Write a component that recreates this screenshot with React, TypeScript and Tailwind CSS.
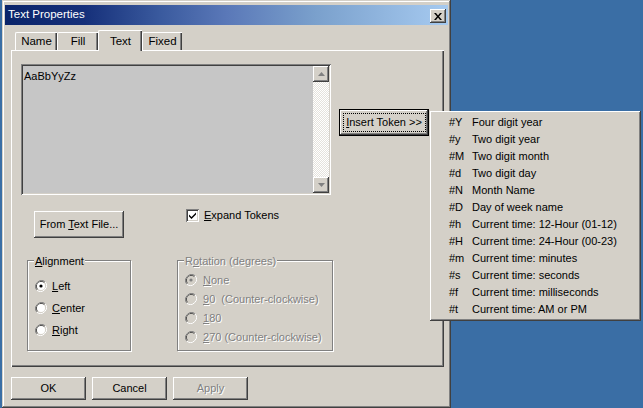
import React from 'react'

const raised =
  'bg-[#d4d0c8] shadow-[inset_-1px_-1px_0_#404040,inset_1px_1px_0_#ffffff,inset_-2px_-2px_0_#808080,inset_2px_2px_0_#d4d0c8]'
const disabledText = 'text-[#808080] [text-shadow:1px_1px_0_#ffffff]'

const tokens: [string, string][] = [
  ['#Y', 'Four digit year'],
  ['#y', 'Two digit year'],
  ['#M', 'Two digit month'],
  ['#d', 'Two digit day'],
  ['#N', 'Month Name'],
  ['#D', 'Day of week name'],
  ['#h', 'Current time: 12-Hour (01-12)'],
  ['#H', 'Current time: 24-Hour (00-23)'],
  ['#m', 'Current time: minutes'],
  ['#s', 'Current time: seconds'],
  ['#f', 'Current time: milliseconds'],
  ['#t', 'Current time: AM or PM'],
]

function Radio({ checked, disabled }: { checked?: boolean; disabled?: boolean }) {
  return (
    <svg width="12" height="12" viewBox="0 0 12 12" className="shrink-0">
      <path d="M10.2 1.8A6 6 0 0 0 1.8 10.2" stroke="#808080" strokeWidth="1" fill="none" />
      <path d="M9.5 2.5A5 5 0 0 0 2.5 9.5" stroke="#404040" strokeWidth="1" fill="none" />
      <path d="M1.8 10.2A6 6 0 0 0 10.2 1.8" stroke="#ffffff" strokeWidth="1" fill="none" />
      <path d="M2.5 9.5A5 5 0 0 0 9.5 2.5" stroke="#d4d0c8" strokeWidth="1" fill="none" />
      <circle cx="6" cy="6" r="4" fill={disabled ? '#d4d0c8' : '#ffffff'} />
      {checked && <circle cx="6" cy="6" r="1.6" fill={disabled ? '#808080' : '#000000'} />}
    </svg>
  )
}

function Arrow({ down }: { down?: boolean }) {
  return (
    <div className={`flex h-[16px] w-[16px] items-center justify-center ${raised}`}>
      <svg width="7" height="4" viewBox="0 0 7 4">
        <path d={down ? 'M0 0h7L3.5 4z' : 'M3.5 0L7 4H0z'} fill="#808080" />
      </svg>
    </div>
  )
}

function Btn({ children, w, disabled }: { children: React.ReactNode; w: string; disabled?: boolean }) {
  return (
    <div className={`flex h-[23px] ${w} items-center justify-center ${raised} ${disabled ? disabledText : ''}`}>
      {children}
    </div>
  )
}

export default function App() {
  return (
    <div className="relative flex h-[408px] w-[643px] overflow-hidden bg-[#3a6ea5] font-['Liberation_Sans',Arial,sans-serif] text-[11px] text-black">
      {/* dialog */}
      <div className="ml-[2px] flex h-[408px] w-[449px] flex-col bg-[#d4d0c8] px-[3px] pt-[5px] shadow-[inset_-1px_-1px_0_#404040,inset_1px_1px_0_#d4d0c8,inset_-2px_-2px_0_#808080,inset_2px_2px_0_#ffffff]">
        <div className="flex h-[20px] items-center bg-[linear-gradient(to_right,#0a246a_0%,#16307a_18%,#3a5a9e_35%,#5a78b8_50%,#7aa0cc_70%,#a6caf0_100%)] pl-[3px] pr-[2px] text-[11.5px] text-white">
          <span className="flex-1">Text Properties</span>
          <div className={`mt-[2px] flex h-[14px] w-[16px] items-center justify-center ${raised}`}>
            <svg width="8" height="7" viewBox="0 0 8 7">
              <path d="M0 0h2l2 2.5L6 0h2L5 3.5 8 7H6L4 4.5 2 7H0l3-3.5z" fill="#000" />
            </svg>
          </div>
        </div>

        {/* tabs */}
        <div className="ml-[8px] mt-[5px] flex h-[20px] items-end">
          <div className="ml-[2px] flex h-[18px] w-[42px] items-center justify-center rounded-tl-[2px] border-l border-t border-white pt-[1px] text-[11.5px] shadow-[inset_-1px_0_0_#404040,inset_-2px_0_0_#808080]">
            Name
          </div>
          <div className="flex h-[18px] w-[41px] items-center justify-center rounded-tl-[2px] border-l border-t border-white pt-[1px] text-[11.5px] shadow-[inset_-1px_0_0_#404040,inset_-2px_0_0_#808080]">
            Fill
          </div>
          <div className="relative z-10 mb-[-1px] flex h-[21px] w-[44px] items-start justify-center rounded-tl-[2px] border-l border-t border-white bg-[#d4d0c8] pt-[2px] text-[11.5px] shadow-[inset_-1px_0_0_#404040,inset_-2px_0_0_#808080]">
            Text
          </div>
          <div className="flex h-[18px] w-[40px] items-center justify-center rounded-tl-[2px] border-l border-t border-white pt-[1px] text-[11.5px] shadow-[inset_-1px_0_0_#404040,inset_-2px_0_0_#808080]">
            Fixed
          </div>
        </div>

        {/* panel */}
        <div className="ml-[6px] flex h-[317px] w-[433px] flex-col border-l border-t border-white shadow-[inset_-1px_-1px_0_#404040,inset_-2px_-2px_0_#808080]">
          <div className="flex">
            <div className="ml-[9px] mt-[13px] flex h-[131px] w-[310px] bg-[#c6c6c6] p-[2px] shadow-[inset_1px_1px_0_#808080,inset_-1px_-1px_0_#ffffff,inset_2px_2px_0_#404040,inset_-2px_-2px_0_#d4d0c8]">
              <div className="flex-1 pl-[1px] pt-[2px]">AaBbYyZz</div>
              <div className="flex w-[16px] flex-col bg-[repeating-conic-gradient(#ffffff_0_25%,#e4e2dc_0_50%)] bg-[length:2px_2px]">
                <Arrow />
                <div className="flex-1" />
                <Arrow down />
              </div>
            </div>
            <div className="ml-[8px] mt-[58px] h-[27px] w-[90px] border border-black">
              <div className={`flex h-full w-full items-center justify-center ${raised}`}>
                <div className="flex h-[19px] w-[83px] items-center justify-center border border-dotted border-black">
                  <span>
                    <u>I</u>nsert Token &gt;&gt;
                  </span>
                </div>
              </div>
            </div>
          </div>

          <div className="mt-[12px] flex items-start">
            <div className={`ml-[22px] mt-[4px] flex h-[27px] w-[90px] items-center justify-center ${raised}`}>
              <span>
                From <u>T</u>ext File...
              </span>
            </div>
            <div className="ml-[62px] flex items-center gap-[5px]">
              <div className="flex h-[13px] w-[13px] items-center justify-center bg-white shadow-[inset_1px_1px_0_#808080,inset_-1px_-1px_0_#ffffff,inset_2px_2px_0_#404040,inset_-2px_-2px_0_#d4d0c8]">
                <svg width="7" height="7" viewBox="0 0 7 7">
                  <path d="M0 2.5l2.5 2.5L7 0.5v2L2.5 7 0 4.5z" fill="#000" />
                </svg>
              </div>
              <span>
                <u>E</u>xpand Tokens
              </span>
            </div>
          </div>

          <div className="mt-[22px] flex items-start">
            <div className="relative ml-[15px] h-[91px] w-[104px] border border-[#808080] shadow-[inset_1px_1px_0_#ffffff,1px_1px_0_#ffffff]">
              <span className="absolute left-[6px] top-[-8px] bg-[#d4d0c8] px-[1px]">
                <u>A</u>lignment
              </span>
              <div className="ml-[7px] mt-[19px] flex flex-col gap-[10px]">
                <div className="flex h-[12px] items-center gap-[5px]">
                  <Radio checked />
                  <span>
                    <u>L</u>eft
                  </span>
                </div>
                <div className="flex h-[12px] items-center gap-[5px]">
                  <Radio />
                  <span>
                    <u>C</u>enter
                  </span>
                </div>
                <div className="flex h-[12px] items-center gap-[5px]">
                  <Radio />
                  <span>
                    <u>R</u>ight
                  </span>
                </div>
              </div>
            </div>

            <div className={`relative ml-[46px] h-[91px] w-[156px] border border-[#808080] shadow-[inset_1px_1px_0_#ffffff,1px_1px_0_#ffffff] ${disabledText}`}>
              <span className="absolute left-[6px] top-[-8px] bg-[#d4d0c8] px-[1px]">
                R<u>o</u>tation (degrees)
              </span>
              <div className="ml-[7px] mt-[13px] flex flex-col gap-[7px]">
                <div className="flex h-[12px] items-center gap-[6px]">
                  <Radio checked disabled />
                  <span>
                    <u>N</u>one
                  </span>
                </div>
                <div className="flex h-[12px] items-center gap-[6px]">
                  <Radio disabled />
                  <span>
                    <u>9</u>0&nbsp;&nbsp;(Counter-clockwise)
                  </span>
                </div>
                <div className="flex h-[12px] items-center gap-[6px]">
                  <Radio disabled />
                  <span>
                    <u>1</u>80
                  </span>
                </div>
                <div className="flex h-[12px] items-center gap-[6px]">
                  <Radio disabled />
                  <span>
                    <u>2</u>70 (Counter-clockwise)
                  </span>
                </div>
              </div>
            </div>
          </div>
        </div>

        {/* bottom buttons */}
        <div className="ml-[6px] mt-[10px] flex gap-[6px]">
          <Btn w="w-[75px]">OK</Btn>
          <Btn w="w-[75px]">Cancel</Btn>
          <Btn w="w-[75px]" disabled>
            Apply
          </Btn>
        </div>
      </div>

      {/* token menu */}
      <div className="absolute left-[430px] top-[111px] w-[211px] bg-[#d4d0c8] py-[3px] pl-[19px] shadow-[inset_-1px_-1px_0_#404040,inset_1px_1px_0_#ffffff,inset_-2px_-2px_0_#808080]">
        {tokens.map(([k, v]) => (
          <div key={k} className="flex h-[17px] items-center">
            <span className="w-[23px]">{k}</span>
            <span>{v}</span>
          </div>
        ))}
      </div>
    </div>
  )
}
